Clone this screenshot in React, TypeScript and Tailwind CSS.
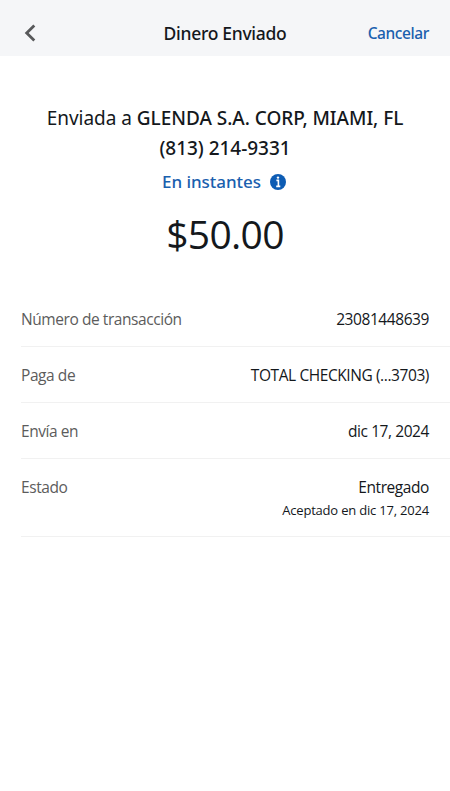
import React from 'react';

interface DetailRow {
  label: string;
  value: string;
  note?: string;
}

const rows: DetailRow[] = [
  { label: 'Número de transacción', value: '23081448639' },
  { label: 'Paga de', value: 'TOTAL CHECKING (...3703)' },
  { label: 'Envía en', value: 'dic 17, 2024' },
  { label: 'Estado', value: 'Entregado', note: 'Aceptado en dic 17, 2024' },
];

const App: React.FC = () => {
  return (
    <div className="w-full h-screen bg-white font-['Open_Sans','Noto_Sans',sans-serif] text-[#14181c] overflow-hidden">
      <header className="h-14 bg-[#f5f6f8] flex items-center justify-between px-[21px] font-['Noto_Sans','Open_Sans',sans-serif] font-medium">
        <button type="button" aria-label="Atrás" className="w-20 pl-[3px] pt-[10px]">
          <svg className="w-[13px] h-[18px]" viewBox="0 0 13 18" fill="none" stroke="#58595b" strokeWidth={2.8}>
            <path d="M10.3 1.5L2.7 9l7.6 7.5" />
          </svg>
        </button>
        <h1 className="pt-[10px] text-[17.5px] tracking-[-0.3px] whitespace-nowrap">Dinero Enviado</h1>
        <button type="button" className="w-20 pt-[11px] text-right text-[15.5px] tracking-[-0.4px] text-[#1a60ae]">Cancelar</button>
      </header>

      <section className="pt-[47px] text-center font-['Noto_Sans','Open_Sans',sans-serif]">
        <p className="text-[19px] leading-[30px] tracking-[-0.03px] whitespace-nowrap">
          Enviada a <span className="font-medium">GLENDA S.A. CORP, MIAMI, FL</span>
          <br />
          <span className="font-medium">(813) 214-9331</span>
        </p>
        <div className="mt-[7px] pr-0.5 flex items-center justify-center gap-[9px] text-[17px] leading-[24px] font-medium tracking-[-0.05px] text-[#1a60ae]">
          <span>En instantes</span>
          <svg className="w-4 h-4" viewBox="0 0 16 16">
            <circle cx="8" cy="8" r="8" fill="#0d5cb4" />
            <path d="M6.4 6.4h2v6M6.2 12.4h4.1" stroke="#fff" strokeWidth="1.6" fill="none" />
            <circle cx="8" cy="3.6" r="1.2" fill="#fff" />
          </svg>
        </div>
        <p className="mt-[13px] font-['Open_Sans',sans-serif] text-[39px] leading-[54px] tracking-[-0.7px]">$50.00</p>
      </section>

      <dl className="mt-[30px] ml-[21px]">
        {rows.map((row) => (
          <div key={row.label} className="flex justify-between pt-4 pb-[15px] pr-[21px] border-b border-[#f1f1f1]">
            <dt className="text-[15.5px] leading-6 tracking-[-0.43px] text-[#5c5c5c]">{row.label}</dt>
            <dd className="text-right text-[15.5px] leading-6 tracking-[-0.42px]">
              {row.value}
              {row.note && <p className="text-[13px] leading-[22px] tracking-[-0.2px]">{row.note}</p>}
            </dd>
          </div>
        ))}
      </dl>
    </div>
  );
};

export default App;
